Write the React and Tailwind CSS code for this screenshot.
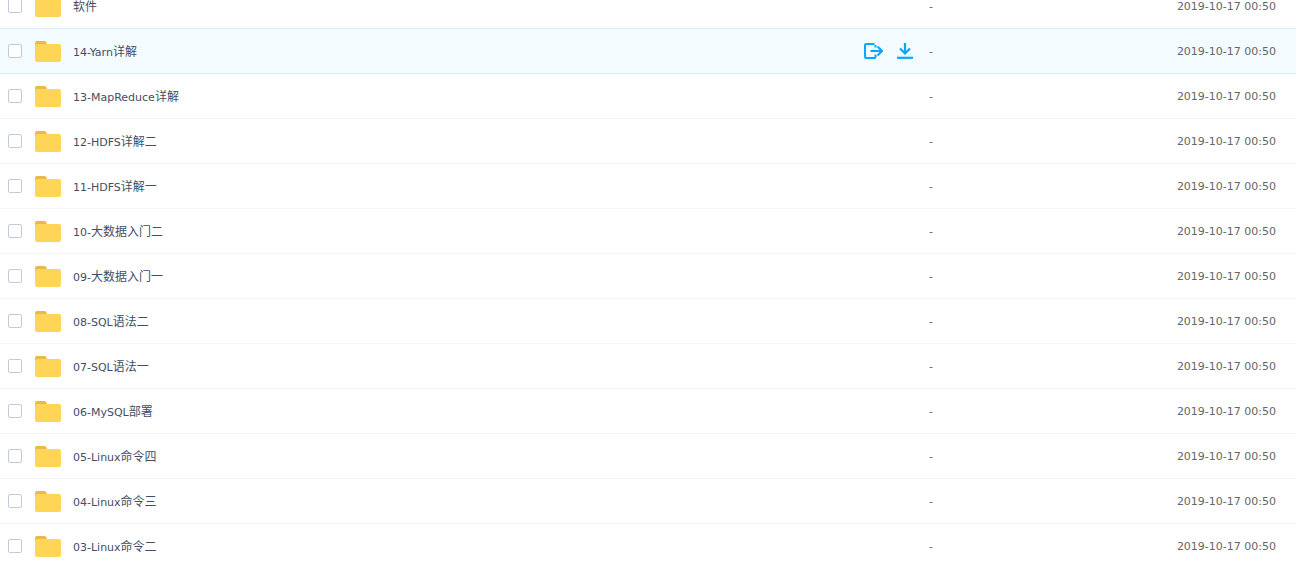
const rows = ["软件","14-Yarn详解","13-MapReduce详解","12-HDFS详解二","11-HDFS详解一","10-大数据入门二","09-大数据入门一","08-SQL语法二","07-SQL语法一","06-MySQL部署","05-Linux命令四","04-Linux命令三","03-Linux命令二"];

function Folder() {
  return (
    <svg width="26" height="21" viewBox="0 0 26 21" className="mt-[1px] block shrink-0">
      <path d="M0 2a2 2 0 0 1 2-2h7.500a2 2 0 0 1 1.600.8L12 3v3H0z" fill="#e9b949" />
      <path d="M0 5a2 2 0 0 1 2-2h22a2 2 0 0 1 2 2v14a2 2 0 0 1-2 2H2a2 2 0 0 1-2-2z" fill="#ffd558" />
    </svg>
  );
}

function ShareIcon() {
  return (
    <svg width="19" height="16" viewBox="0 0 19 16" fill="none" stroke="#06a7ff" strokeWidth="2" className="block shrink-0">
      <path d="M10.500 1H2a1 1 0 0 0-1 1v12a1 1 0 0 0 1 1h8.500a1 1 0 0 0 1-1v-2.500" />
      <path d="M11.500 4.500V2M6.500 8H17.500M13.500 3.500L18 8l-4.500 4.500" />
    </svg>
  );
}

function DownloadIcon() {
  return (
    <svg width="16" height="16" viewBox="0 0 16 16" fill="none" stroke="#06a7ff" strokeWidth="2.200" className="block shrink-0">
      <path d="M0 14.800H16" />
      <path d="M8 0V10M3 5.500L8 10.500 13 5.500" />
    </svg>
  );
}

function Name({ text }) {
  const parts = text.split(/([\u4e00-\u9fff]+)/).filter(Boolean);
  return parts.map((p, i) =>
    /[\u4e00-\u9fff]/.test(p) ? <span key={i} className="text-[12px]">{p}</span> : <span key={i}>{p}</span>
  );
}

export default function App() {
  return (
    <div className="h-[566px] w-[1296px] overflow-hidden bg-white font-['DejaVu_Sans','Noto_Sans_CJK_SC',sans-serif] text-[11px]">
      <div className="-mt-[16px]">
        {rows.map((name, i) => {
          const active = i === 1;
          return (
            <div key={name} className={`flex h-[45px] items-center border-b ${active ? "border-[#d9eeff] bg-[#f4fbff]" : i === 0 ? "border-[#d9eeff]" : "border-[#f3f5f9]"}`}>
              <span className="ml-[8px] h-[14px] w-[14px] shrink-0 rounded-[2px] border border-[#c2cbd9] bg-white" />
              <span className="ml-[13px]"><Folder /></span>
              <span className="ml-[12px] grow pt-[2px] text-[#424e67]"><Name text={name} /></span>
              {active && (
                <span className="flex items-center gap-[14px]">
                  <ShareIcon />
                  <DownloadIcon />
                </span>
              )}
              <span className={`w-[247px] shrink-0 pt-[2px] text-[#666] ${active ? "ml-[16px]" : ""}`}>-</span>
              <span className="mr-[20px] w-[100px] shrink-0 whitespace-nowrap pt-[2px] text-right text-[#666]">2019-10-17 00:50</span>
            </div>
          );
        })}
      </div>
    </div>
  );
}
